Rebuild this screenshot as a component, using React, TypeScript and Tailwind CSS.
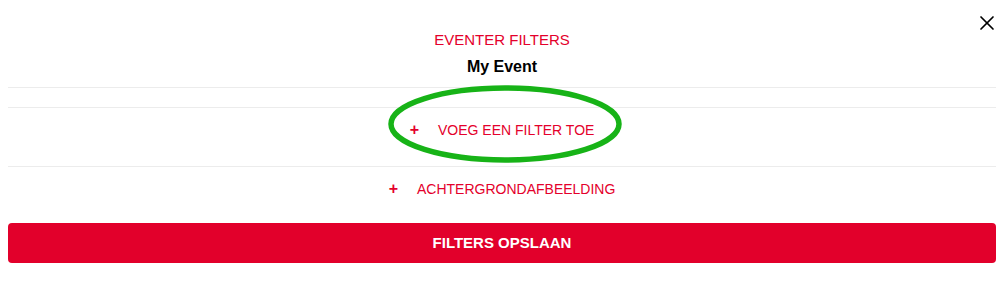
import React from 'react';
import { X } from 'lucide-react';

const red = 'text-[#e4002b]';

function AddRow({ label, className }: { label: string; className?: string }) {
  return (
    <button className={`flex w-full items-center justify-center ${className ?? ''}`}>
      <span className={`${red} font-bold text-[16px] leading-[20px] mr-[19px]`}>+</span>
      <span className={`${red} text-[14px] leading-[20px]`}>{label}</span>
    </button>
  );
}

export default function App() {
  return (
    <div className="relative w-full bg-white px-2 pb-10 font-['Liberation_Sans',Arial,sans-serif]">
      {/* Close */}
      <button className="absolute right-[5px] top-[11px] text-black">
        <X size={24} strokeWidth={1.7} />
      </button>

      {/* Header */}
      <div className="flex flex-col items-center pt-[30px] pb-[10px]">
        <div className={`${red} text-[15px] leading-[20px]`}>EVENTER FILTERS</div>
        <div className="mt-[7px] text-[16px] leading-[20px] font-bold text-black">My Event</div>
      </div>

      <div className="h-[21px] border-t border-b border-[#ececec]" />

      <AddRow label="VOEG EEN FILTER TOE" className="pt-[12px] pb-[26px]" />

      <div className="border-t border-[#ececec]" />

      <AddRow label="ACHTERGRONDAFBEELDING" className="pt-[12px] pb-[24px]" />

      <button className="flex h-[40px] w-full items-center justify-center rounded-[4px] bg-[#e2002b] text-[15px] font-bold text-white">
        FILTERS OPSLAAN
      </button>

      {/* Annotation highlight */}
      <svg
        className="pointer-events-none absolute left-[385px] top-[83px]"
        width="240"
        height="82"
        viewBox="0 0 240 82"
      >
        <ellipse cx="120" cy="41" rx="114" ry="36" fill="none" stroke="#17b317" strokeWidth="5.5" />
      </svg>
    </div>
  );
}
